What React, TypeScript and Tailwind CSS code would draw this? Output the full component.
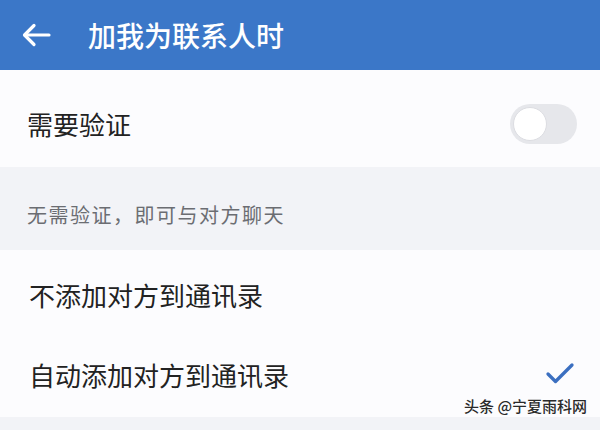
import { Check } from "lucide-react";

const font = { fontFamily: '"Noto Sans CJK SC", "Noto Sans", sans-serif' };

function Toggle() {
  return (
    <div className="w-[67px] h-[40px] rounded-full bg-[#e6e7eb] p-[3px] flex items-center">
      <div className="w-[34px] h-[34px] rounded-full bg-white border border-[#dcdde2]" />
    </div>
  );
}

export default function App() {
  return (
    <div className="w-[600px] h-[430px] overflow-hidden bg-[#f2f3f7] flex flex-col" style={font}>
      <div className="h-[70px] bg-[#3b77c8] flex items-center pl-[22px] shrink-0">
        <svg width="29" height="24" viewBox="0 0 29 24" fill="none" stroke="white" strokeWidth="3.2" strokeLinecap="round" strokeLinejoin="round">
          <path d="M27 12H3" />
          <path d="M12 2.5L2.5 12l9.5 9.5" />
        </svg>
        <span className="ml-[37px] text-[28px] leading-none text-white font-medium">加我为联系人时</span>
      </div>

      <div className="h-[97px] bg-[#fcfcfe] flex items-center justify-between pl-[27px] pr-[23px] pt-[11px] shrink-0">
        <span className="text-[26px] text-[#222] leading-none">需要验证</span>
        <Toggle />
      </div>

      <div className="h-[83px] flex items-center pl-[27px] pt-[12px] shrink-0">
        <span className="text-[20px] text-[#6b6d72] leading-none tracking-[1.5px]">无需验证，即可与对方聊天</span>
      </div>

      <div className="h-[84px] bg-[#fcfcfe] flex items-center pl-[29px] pt-[6px] shrink-0">
        <span className="text-[26px] text-[#222] leading-none">不添加对方到通讯录</span>
      </div>

      <div className="relative h-[83px] bg-[#fcfcfe] flex items-center justify-between pl-[29px] pr-[22px] shrink-0">
        <span className="text-[26px] text-[#222] leading-none -mt-[2px]">自动添加对方到通讯录</span>
        <Check className="w-[36px] h-[36px] text-[#3b6fc0] -mt-[4px]" strokeWidth={2.2} />
        <span className="absolute right-[13px] bottom-[4px] text-[15px] leading-none text-[#2a2a2a] font-medium [text-shadow:0_0_2px_#fff]">
          头条 @宁夏雨科网
        </span>
      </div>
    </div>
  );
}
